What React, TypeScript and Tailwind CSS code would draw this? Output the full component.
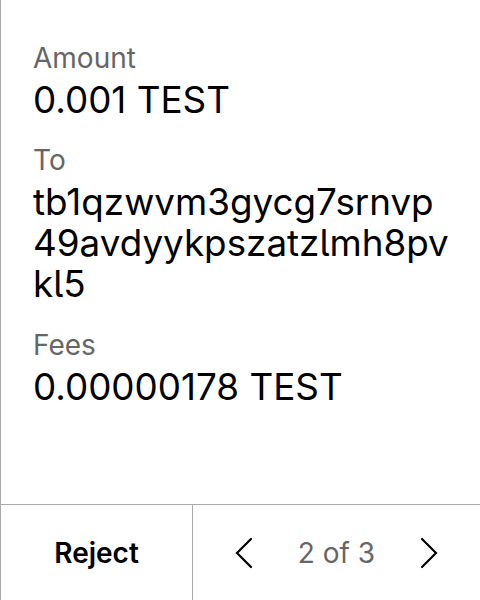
import React from "react";

function Chevron({ dir }: { dir: "left" | "right" }) {
  return (
    <svg width="18" height="32" viewBox="0 0 18 32" fill="none" stroke="#000" strokeWidth="2.2" strokeLinecap="round" strokeLinejoin="miter">
      {dir === "left" ? <path d="M16 2 L2 16 L16 30" /> : <path d="M2 2 L16 16 L2 30" />}
    </svg>
  );
}

function Field({ label, value, className = "" }: { label: string; value: string; className?: string }) {
  return (
    <div className={className}>
      <p className="text-[28px] leading-[34px] text-[#666666]">{label}</p>
      <p className="mt-1 text-[36.8px] leading-[41px] text-black break-all [font-feature-settings:'cv05']">{value}</p>
    </div>
  );
}

export default function App() {
  return (
    <div
      className="h-[600px] w-[480px] flex flex-col bg-white border-l border-[#aaaaaa]"
      style={{ fontFamily: "Inter, 'Liberation Sans', sans-serif" }}
    >
      {/* Transaction details */}
      <div className="flex-1 pl-[32px] pr-[28px] pt-[41px]">
        <Field label="Amount" value="0.001 TEST" />
        <Field label="To" value="tb1qzwvm3gycg7srnvp49avdyykpszatzlmh8pvkl5" className="mt-[23px]" />
        <Field label="Fees" value="0.00000178 TEST" className="mt-[24px]" />
      </div>

      {/* Footer actions */}
      <div className="h-[96px] flex border-t border-[#aaaaaa]">
        <button className="w-[192px] flex items-center justify-center text-[28px] font-semibold text-black border-r border-[#aaaaaa]">
          Reject
        </button>
        <div className="flex-1 flex items-center justify-between px-[42px]">
          <Chevron dir="left" />
          <span className="text-[28px] text-[#666666]">2 of 3</span>
          <Chevron dir="right" />
        </div>
      </div>
    </div>
  );
}
